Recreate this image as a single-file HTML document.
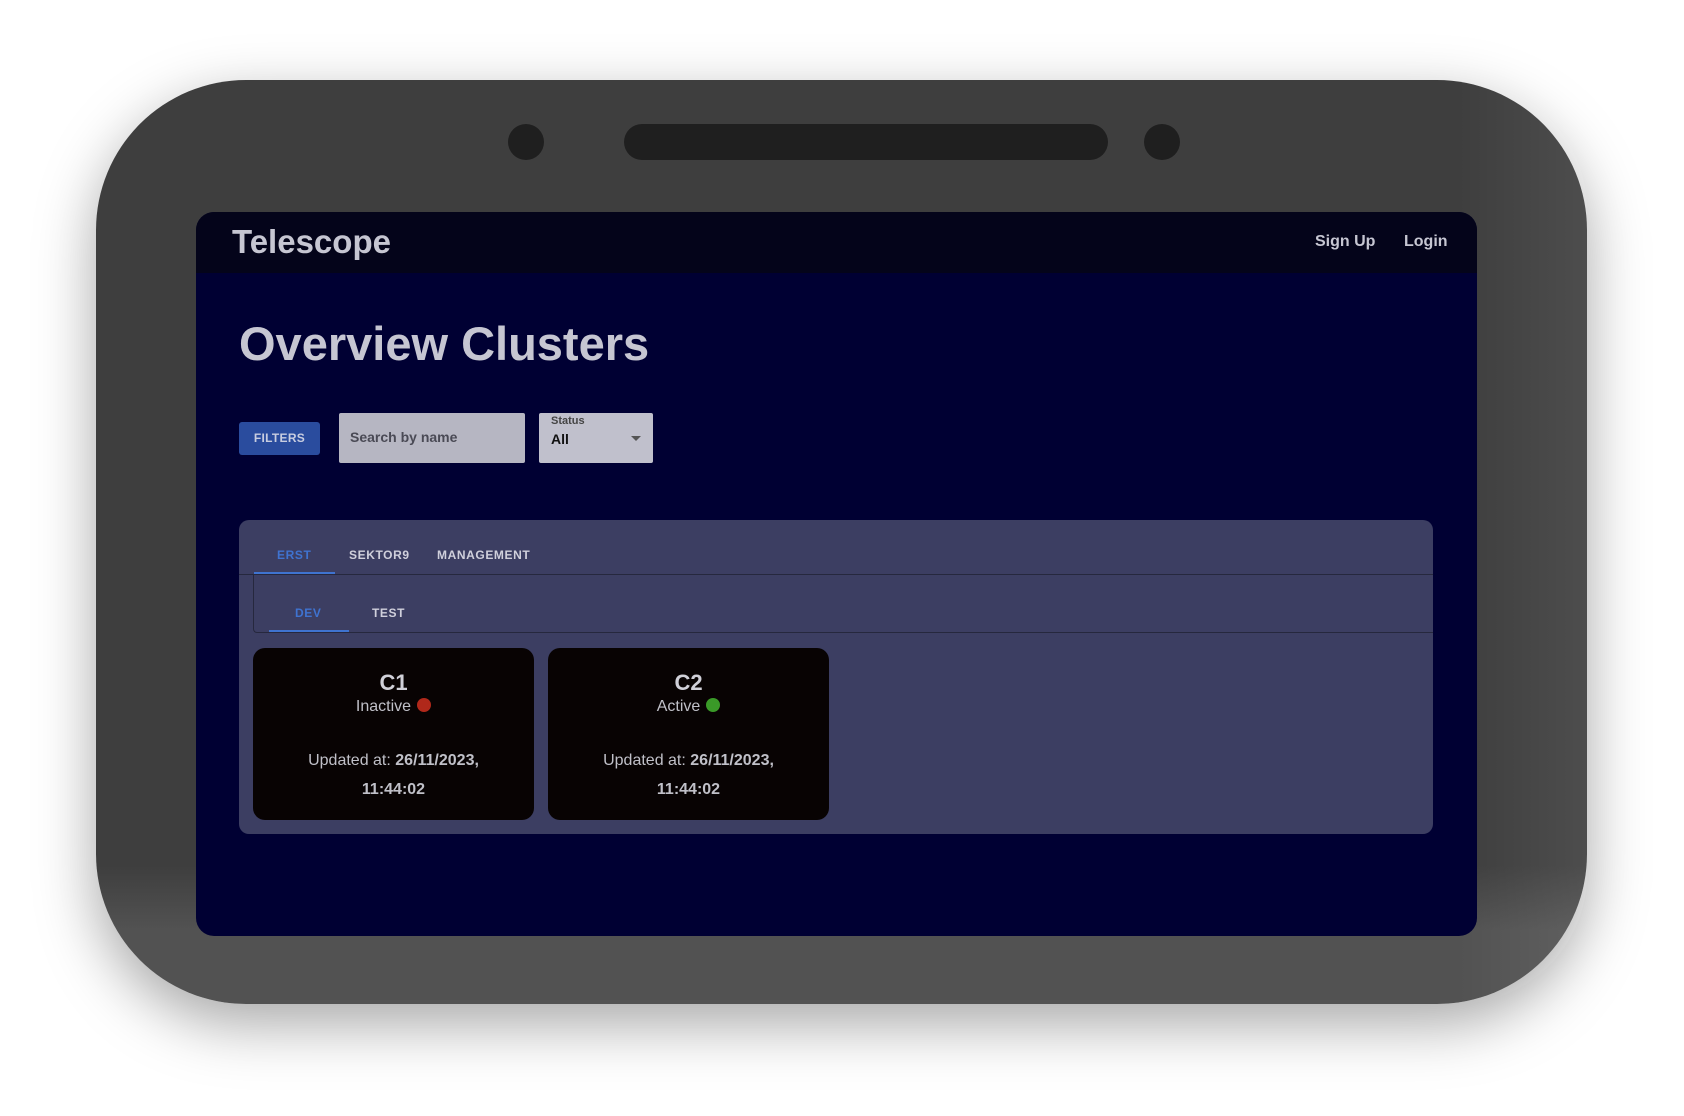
<!DOCTYPE html>
<html><head><meta charset="utf-8"><style>
*{margin:0;padding:0;box-sizing:border-box}
body{width:1684px;height:1116px;background:#fff;position:relative;overflow:hidden;font-family:"Liberation Sans",sans-serif}
.dev{position:absolute;left:96px;top:80px;width:1491px;height:924px;border-radius:150px;background:linear-gradient(180deg,#3e3e3e 0%,#3e3e3e 85%,#525252 92%,#525252 100%);box-shadow:0 20px 60px rgba(0,0,0,.35)}
.dev:after{content:"";position:absolute;right:0;top:0;width:130px;height:100%;border-radius:0 150px 150px 0;background:linear-gradient(90deg,rgba(255,255,255,0),rgba(255,255,255,.08))}
.dot{position:absolute;top:124px;width:36px;height:36px;border-radius:50%;background:#1f1f1f}
.bar{position:absolute;left:624px;top:124px;width:484px;height:36px;border-radius:18px;background:#1f1f1f}
.scr{position:absolute;left:196px;top:212px;width:1281px;height:724px;border-radius:18px;background:#000033;overflow:hidden;color:#c6c6d2}
.hdr{height:61px;background:#04041a;position:relative}
.logo{position:absolute;left:36px;top:11px;font-size:33px;font-weight:bold}
.nav{position:absolute;top:21px;font-size:16px;font-weight:bold}
h1{position:absolute;left:43px;top:104px;font-size:47px;font-weight:bold}
.fb{position:absolute;left:43px;top:210px;width:81px;height:33px;background:#2a4c9e;border-radius:3px;color:#c8cde0;font-size:12px;font-weight:bold;text-align:center;line-height:33px;letter-spacing:.3px}
.in{position:absolute;left:143px;top:201px;width:186px;height:50px;background:#b6b6c2;border-radius:2px;color:#4a4a55;font-size:14px;font-weight:bold;padding:16px 11px}
.sel{position:absolute;left:343px;top:201px;width:114px;height:50px;background:#c0c0cc;border-radius:2px;color:#111}
.panel{position:absolute;left:43px;top:308px;width:1194px;height:314px;background:#3c3e62;border-radius:10px}
.tab{position:absolute;font-size:12px;font-weight:bold;color:#d0d0dc;letter-spacing:.6px}
.card{position:absolute;top:128px;width:281px;height:172px;background:#080303;border-radius:12px;text-align:center;color:#c0c0c8}
.card b.t{display:block;margin-top:22px;font-size:22px;color:#d0d0d8}
.st{font-size:16px;margin-top:2px}
.st i{display:inline-block;width:14px;height:14px;border-radius:50%;vertical-align:-1px;margin-left:6px}
.up{font-size:16px;margin-top:30px;line-height:29px}
</style></head><body>
<div class="dev"></div>
<div class="dot" style="left:508px"></div><div class="bar"></div><div class="dot" style="left:1144px"></div>
<div class="scr">
 <div class="hdr"><div class="logo">Telescope</div><div class="nav" style="left:1119px">Sign Up</div><div class="nav" style="left:1208px">Login</div></div>
 <h1>Overview Clusters</h1>
 <div class="fb">FILTERS</div>
 <div class="in">Search by name</div>
 <div class="sel"><div style="position:absolute;left:12px;top:2px;font-size:11px;font-weight:bold;color:#444">Status</div><div style="position:absolute;left:12px;top:18px;font-size:14px;font-weight:bold">All</div><div style="position:absolute;right:12px;top:23px;border:5px solid transparent;border-top-color:#555;border-bottom:0"></div></div>
 <div class="panel">
  <div class="tab" style="left:38px;top:28px;color:#3f73d0">ERST</div>
  <div class="tab" style="left:110px;top:28px">SEKTOR9</div>
  <div class="tab" style="left:198px;top:28px">MANAGEMENT</div>
  <div style="position:absolute;left:15px;top:52px;width:81px;height:2px;background:#3f73d0"></div>
  <div style="position:absolute;left:0;top:54px;width:1194px;height:1px;background:#26283e"></div>
  <div style="position:absolute;left:14px;top:55px;width:1180px;height:58px;border-left:1px solid #26283e;border-bottom:1px solid #26283e;border-bottom-left-radius:4px"></div>
  <div class="tab" style="left:56px;top:86px;color:#3f73d0">DEV</div>
  <div class="tab" style="left:133px;top:86px">TEST</div>
  <div style="position:absolute;left:30px;top:110px;width:80px;height:2px;background:#3f73d0"></div>
  <div class="card" style="left:14px"><b class="t">C1</b><div class="st">Inactive<i style="background:#b0281a"></i></div><div class="up">Updated at: <b>26/11/2023,<br>11:44:02</b></div></div>
  <div class="card" style="left:309px"><b class="t">C2</b><div class="st">Active<i style="background:#3a9a28"></i></div><div class="up">Updated at: <b>26/11/2023,<br>11:44:02</b></div></div>
 </div>
</div>
</body></html>
